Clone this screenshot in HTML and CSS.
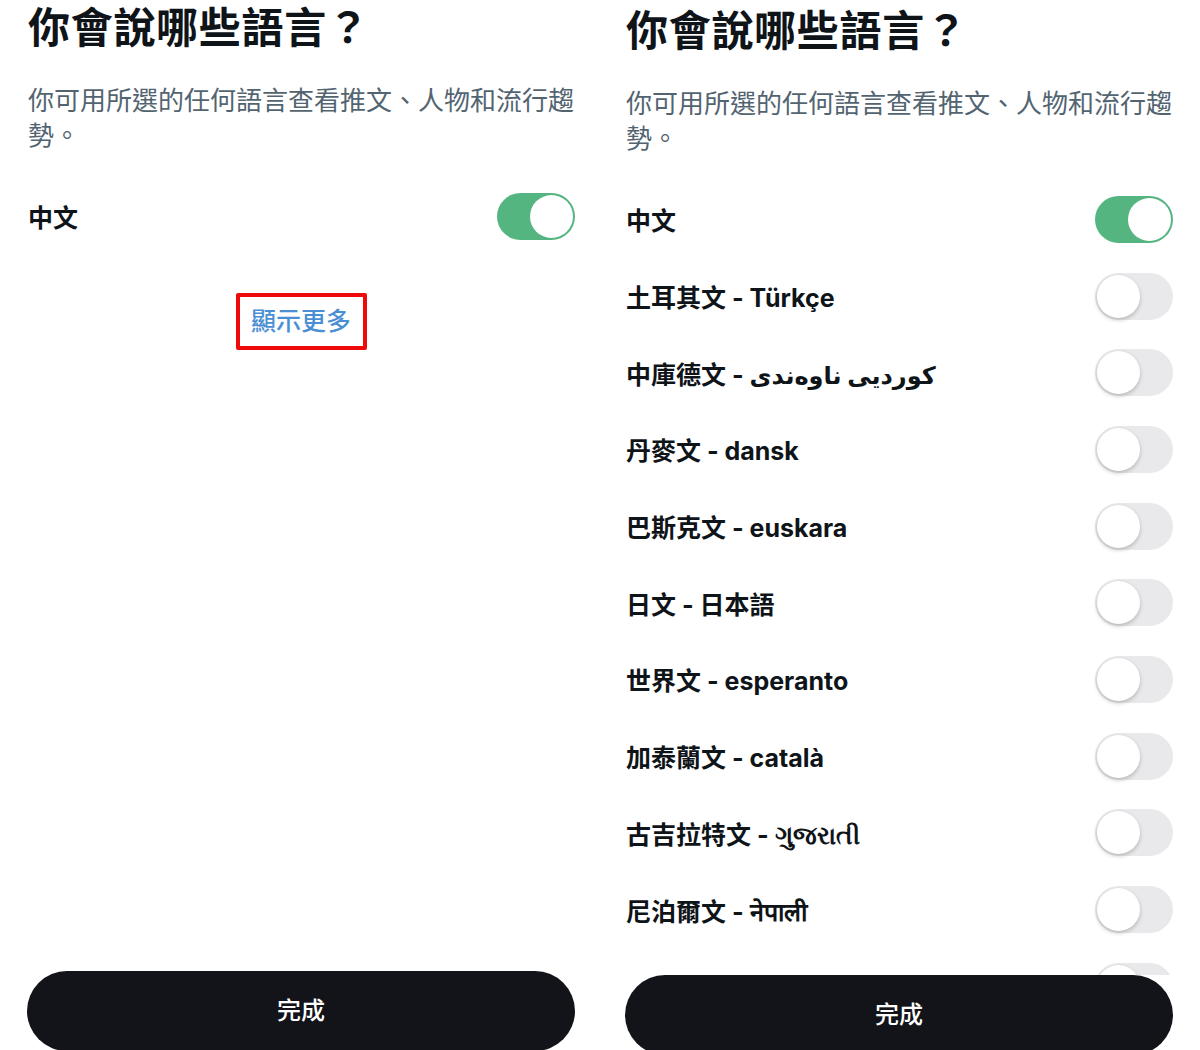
FILE: index.html
```html
<!DOCTYPE html>
<html lang="zh-Hant">
<head>
    <meta charset="UTF-8">
    <meta name="viewport" content="width=device-width, initial-scale=1.0">
    <title>你會說哪些語言？</title>
    <link rel="stylesheet" href="styles.css">
</head>
<body>

    <div class="screens">

        <!-- Collapsed: only the current language -->
        <section class="panel">
            <div class="panel-body">
                <h1>你會說哪些語言？</h1>
                <p class="intro">你可用所選的任何語言查看推文、人物和流行趨勢。</p>

                <ul class="lang-list">
                    <li><span>中文</span><span class="switch on"><span class="knob"></span></span></li>
                </ul>

                <div class="more-wrap">
                    <a href="#" class="show-more">顯示更多</a>
                </div>
            </div>
            <button class="done">完成</button>
        </section>

        <!-- Expanded list -->
        <section class="panel panel-expanded">
            <div class="panel-body">
                <h1>你會說哪些語言？</h1>
                <p class="intro">你可用所選的任何語言查看推文、人物和流行趨勢。</p>

                <ul class="lang-list">
                    <li><span>中文</span><span class="switch on"><span class="knob"></span></span></li>
                    <li><span>土耳其文 - Türkçe</span><span class="switch"><span class="knob"></span></span></li>
                    <li><span>中庫德文 - <bdi class="rtl">کوردیی ناوەندی</bdi></span><span class="switch"><span class="knob"></span></span></li>
                    <li><span>丹麥文 - dansk</span><span class="switch"><span class="knob"></span></span></li>
                    <li><span>巴斯克文 - euskara</span><span class="switch"><span class="knob"></span></span></li>
                    <li><span>日文 - 日本語</span><span class="switch"><span class="knob"></span></span></li>
                    <li><span>世界文 - esperanto</span><span class="switch"><span class="knob"></span></span></li>
                    <li><span>加泰蘭文 - català</span><span class="switch"><span class="knob"></span></span></li>
                    <li><span>古吉拉特文 - ગુજરાતી</span><span class="switch"><span class="knob"></span></span></li>
                    <li><span>尼泊爾文 - नेपाली</span><span class="switch"><span class="knob"></span></span></li>
                    <li><span></span><span class="switch"><span class="knob"></span></span></li>
                </ul>
            </div>
            <button class="done">完成</button>
        </section>

    </div>

</body>
</html>
```

FILE: styles.css
```css
/* General styles */
body {
    margin: 0;
    padding: 0;
    background-color: #fff;
    color: #0f1419;
    font-family: Inter, "Noto Sans CJK TC", "DejaVu Sans", sans-serif;
    overflow: hidden;
}

.screens {
    display: grid;
    grid-template-columns: 598px 602px;
    height: 1050px;
}

/* Panel */
.panel {
    display: flex;
    flex-direction: column;
    height: 1050px;
    padding: 3px 0 0 28px;
    box-sizing: border-box;
    overflow: hidden;
}

.panel-expanded {
    padding-top: 6px;
}

.panel-body {
    flex: 1;
    min-height: 0;
    width: 547px;
    overflow: hidden;
}

h1 {
    margin: 0;
    font-size: 42px;
    line-height: 50px;
    font-weight: 700;
    letter-spacing: 0.7px;
}

.intro {
    margin: 30px 0 0;
    font-size: 26px;
    line-height: 35px;
    color: #536471;
}

/* Language list */
.lang-list {
    list-style: none;
    margin: 25px 0 0;
    padding: 0;
}

.lang-list li {
    display: flex;
    align-items: center;
    justify-content: space-between;
    height: 76.7px;
    font-size: 25px;
    font-weight: 700;
}

.rtl {
    font-size: 24px;
}

/* Switches */
.switch {
    position: relative;
    flex-shrink: 0;
    width: 78px;
    height: 47px;
    border-radius: 24px;
    background-color: #e9e9eb;
}

.switch .knob {
    position: absolute;
    top: 2px;
    left: 2px;
    width: 43px;
    height: 43px;
    border-radius: 50%;
    background-color: #fff;
    box-shadow: 0 2px 4px rgba(0, 0, 0, 0.22);
}

.switch.on {
    background-color: #55b580;
}

.switch.on .knob {
    left: 33px;
    box-shadow: none;
}

/* Show more */
.more-wrap {
    margin-top: 38px;
    text-align: center;
}

.show-more {
    display: inline-block;
    padding: 7px 12px 7px 11px;
    border: 4px solid #ee0a0a;
    border-radius: 2px;
    font-size: 25px;
    line-height: 35px;
    font-weight: 500;
    color: #4a8fd3;
    text-decoration: none;
}

/* Done button */
.done {
    flex-shrink: 0;
    width: 548px;
    height: 80px;
    margin: 0 0 -1px -1px;
    padding: 0 0 6px;
    border: none;
    border-radius: 40px;
    background-color: #121419;
    color: #fff;
    font-family: inherit;
    font-size: 24px;
    font-weight: 500;
}

.panel-expanded .done {
    margin-bottom: -5px;
}
```
